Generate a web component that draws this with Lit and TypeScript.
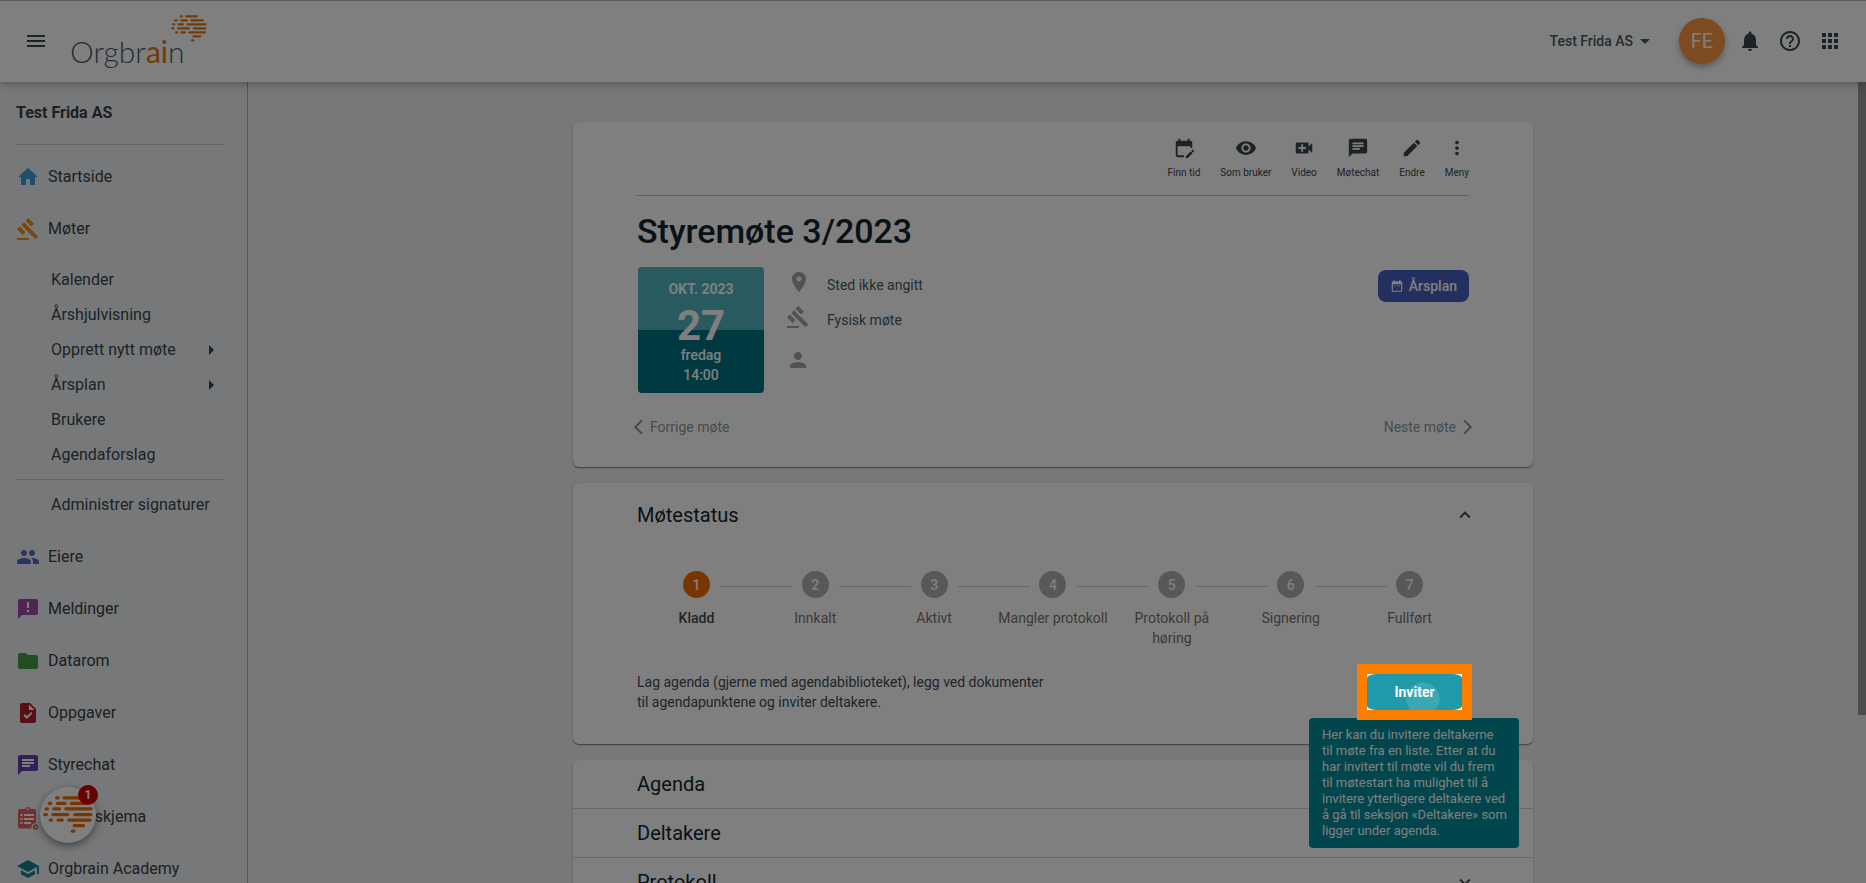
import { LitElement, html, svg, css, nothing } from "lit";
import { customElement, property, state } from "lit/decorators.js";
import { classMap } from "lit/directives/class-map.js";

const ICONS: Record<string, unknown> = {
  menu: svg`<path d="M3 18h18v-2H3v2zm0-5h18v-2H3v2zm0-7v2h18V6H3z"/>`,
  home: svg`<path d="M10 20v-6h4v6h5v-8h3L12 3 2 12h3v8z"/>`,
  gavel: svg`<path d="M1 21h12v2H1zM5.245 8.07l2.83-2.827 14.14 14.142-2.828 2.828zM12.317 1l5.657 5.656-2.83 2.83-5.654-5.66zM3.825 9.485l5.657 5.657-2.828 2.828-5.657-5.657z"/>`,
  group: svg`<path d="M16 11c1.66 0 2.99-1.34 2.99-3S17.66 5 16 5c-1.66 0-3 1.34-3 3s1.34 3 3 3zm-8 0c1.66 0 2.99-1.34 2.99-3S9.66 5 8 5C6.34 5 5 6.34 5 8s1.34 3 3 3zm0 2c-2.33 0-7 1.17-7 3.5V19h14v-2.5c0-2.33-4.67-3.5-7-3.5zm8 0c-.29 0-.62.02-.97.05 1.16.84 1.97 1.97 1.97 3.45V19h6v-2.5c0-2.33-4.67-3.5-7-3.5z"/>`,
  announce: svg`<path d="M20 2H4c-1.1 0-1.99.9-1.99 2L2 22l4-4h14c1.1 0 2-.9 2-2V4c0-1.1-.9-2-2-2z"/><path fill="#fff" d="M11 5h2v6h-2zM11 13h2v2h-2z"/>`,
  folder: svg`<path d="M10 4H4c-1.1 0-1.99.9-1.99 2L2 18c0 1.1.9 2 2 2h16c1.1 0 2-.9 2-2V8c0-1.1-.9-2-2-2h-8l-2-2z"/>`,
  task: svg`<path d="M14 2H6c-1.1 0-1.99.9-1.99 2L4 20c0 1.1.89 2 1.99 2H18c1.1 0 2-.9 2-2V8l-6-6z"/><path fill="#fff" d="M10.94 18L7.4 14.46l1.41-1.41 2.12 2.12 4.24-4.24 1.41 1.41L10.94 18zM13 9V3.5L18.5 9H13z"/>`,
  chat: svg`<path d="M20 2H4c-1.1 0-1.99.9-1.99 2L2 22l4-4h14c1.1 0 2-.9 2-2V4c0-1.1-.9-2-2-2z"/><path fill="#fff" d="M6 9h12v2H6zM6 12h8v2H6zM6 6h12v2H6z"/>`,
  form: svg`<path d="M18.500 4h-4a3 3 0 0 0-5.600 0H4a2 2 0 0 0-2 2v15.500a2 2 0 0 0 2 2h11.500a4.200 4.200 0 0 1 4.500-5.500V6a2 2 0 0 0-1.500-2z"/><circle cx="11.600" cy="4.200" r="1" fill="#fff"/><path fill="#fff" d="M4.500 9h2v2h-2zM8 9h10v2H8zM4.500 13h2v2h-2zM8 13h10v2H8zM4.500 17h2v2h-2zM8 17h7v2H8z"/><circle cx="19.500" cy="22" r="2.700"/><path d="M18.200 22l1 1 1.700-1.900" fill="none" stroke="#fff"/>`,
  school: svg`<path d="M5 13.18v4L12 21l7-3.820v-4L12 17l-7-3.820zM12 3L1 9l11 6 9-4.910V17h2V9L12 3z"/>`,
  bell: svg`<path d="M12 22c1.100 0 2-.9 2-2h-4c0 1.100.89 2 2 2zm6-6v-5c0-3.070-1.640-5.640-4.500-6.320V4c0-.83-.67-1.500-1.500-1.500s-1.500.67-1.500 1.500v.68C7.630 5.360 6 7.920 6 11v5l-2 2v1h16v-1l-2-2z"/>`,
  help: svg`<path d="M11 18h2v-2h-2v2zm1-16C6.480 2 2 6.480 2 12s4.480 10 10 10 10-4.480 10-10S17.520 2 12 2zm0 18c-4.410 0-8-3.590-8-8s3.590-8 8-8 8 3.590 8 8-3.590 8-8 8zm0-14c-2.210 0-4 1.790-4 4h2c0-1.100.9-2 2-2s2 .9 2 2c0 2-3 1.750-3 5h2c0-2.250 3-2.500 3-5 0-2.210-1.790-4-4-4z"/>`,
  apps: svg`<path d="M4 8h4V4H4v4zm6 12h4v-4h-4v4zm-6 0h4v-4H4v4zm0-6h4v-4H4v4zm6 0h4v-4h-4v4zm6-10v4h4V4h-4zm-6 4h4V4h-4v4zm6 6h4v-4h-4v4zm0 6h4v-4h-4v4z"/>`,
  eye: svg`<path d="M12 4.500C7 4.500 2.730 7.610 1 12c1.730 4.390 6 7.500 11 7.500s9.270-3.110 11-7.500c-1.730-4.390-6-7.500-11-7.500zM12 17c-2.760 0-5-2.240-5-5s2.240-5 5-5 5 2.240 5 5-2.240 5-5 5zm0-8c-1.660 0-3 1.340-3 3s1.340 3 3 3 3-1.340 3-3-1.340-3-3-3z"/>`,
  video: svg`<path d="M17 10.500V7c0-.55-.45-1-1-1H4c-.55 0-1 .45-1 1v10c0 .55.45 1 1 1h12c.55 0 1-.45 1-1v-3.500l4 4v-11l-4 4zM14 13h-3v3H9v-3H6v-2h3V8h2v3h3v2z"/>`,
  edit: svg`<path d="M3 17.250V21h3.750L17.810 9.940l-3.750-3.750L3 17.250zM20.710 7.040c.39-.39.39-1.020 0-1.410l-2.340-2.340c-.39-.39-1.020-.39-1.410 0l-1.830 1.830 3.750 3.750 1.830-1.830z"/>`,
  more: svg`<path d="M12 8c1.100 0 2-.9 2-2s-.9-2-2-2-2 .9-2 2 .9 2 2 2zm0 2c-1.100 0-2 .9-2 2s.9 2 2 2 2-.9 2-2-.9-2-2-2zm0 6c-1.100 0-2 .9-2 2s.9 2 2 2 2-.9 2-2-.9-2-2-2z"/>`,
  calendarEdit: svg`<path d="M12 22H5c-1.110 0-2-.9-2-2L3.010 6c0-1.100.88-2 1.990-2h1V2h2v2h8V2h2v2h1c1.100 0 2 .9 2 2v6h-2v-2H5v10h7v2zM22.130 16.990l.71-.71c.39-.39.39-1.020 0-1.410l-.71-.71c-.39-.39-1.020-.39-1.410 0l-.71.71 2.120 2.120zM21.420 17.700l-5.300 5.300H14v-2.120l5.300-5.300 2.120 2.120z"/>`,
  place: svg`<path d="M12 2C8.130 2 5 5.130 5 9c0 5.250 7 13 7 13s7-7.750 7-13c0-3.870-3.130-7-7-7zm0 9.500c-1.380 0-2.500-1.120-2.500-2.500s1.120-2.500 2.500-2.500 2.500 1.120 2.500 2.500-1.120 2.500-2.500 2.500z"/>`,
  person: svg`<path d="M12 12c2.210 0 4-1.790 4-4s-1.790-4-4-4-4 1.790-4 4 1.790 4 4 4zm0 2c-2.670 0-8 1.340-8 4v2h16v-2c0-2.660-5.330-4-8-4z"/>`,
  calendar: svg`<path d="M9 11H7v2h2v-2zm4 0h-2v2h2v-2zm4 0h-2v2h2v-2zm2-7h-1V2h-2v2H8V2H6v2H5c-1.110 0-1.990.9-1.990 2L3 20c0 1.100.89 2 2 2h14c1.100 0 2-.9 2-2V6c0-1.100-.9-2-2-2zm0 16H5V9h14v11z"/>`,
  less: svg`<path d="M12 8l-6 6 1.410 1.410L12 10.830l4.590 4.580L18 14z"/>`,
  expand: svg`<path d="M16.590 8.590L12 13.170 7.410 8.590 6 10l6 6 6-6z"/>`,
  prev: svg`<path d="M16 3l-9 9 9 9" fill="none" stroke="currentColor" stroke-width="2.500"/>`,
  next: svg`<path d="M8 3l9 9-9 9" fill="none" stroke="currentColor" stroke-width="2.500"/>`,
  down: svg`<path d="M7 10l5 5 5-5z"/>`,
  right: svg`<path d="M9 7l5 5-5 5z"/>`,
};

@customElement("ob-icon")
class ObIcon extends LitElement {
  @property() name = "";

  static styles = css`
    :host {
      display: inline-flex;
      flex: none;
      width: 24px;
      height: 24px;
    }
    svg {
      width: 100%;
      height: 100%;
      fill: currentColor;
      overflow: visible;
    }
  `;

  render() {
    return html`<svg viewBox="0 0 24 24" aria-hidden="true">${ICONS[this.name] ?? nothing}</svg>`;
  }
}

/* Rows of dashes forming the brain mark: [row, start, end] */
const DASHES: [number, number, number][] = [
  [0, 26, 36], [0, 42, 81],
  [1, 10, 20], [1, 28, 51], [1, 58, 98],
  [2, 3, 13], [2, 20, 39], [2, 46, 107],
  [3, 0, 11], [3, 18, 57], [3, 65, 107],
  [4, 12, 22], [4, 29, 45], [4, 52, 105],
  [5, 64, 91],
  [6, 60, 70],
];

@customElement("ob-brain")
class ObBrain extends LitElement {
  static styles = css`
    :host {
      display: block;
    }
    svg {
      display: block;
      width: 100%;
      stroke: currentColor;
      stroke-width: 7;
      stroke-linecap: round;
    }
  `;

  render() {
    return html`<svg viewBox="0 0 108 80" aria-hidden="true">
      ${DASHES.map(([r, a, b]) => svg`<path d="M${a + 3.5} ${r * 12 + 4}H${b - 3.5}"/>`)}
    </svg>`;
  }
}

interface NavItem {
  label: string;
  icon: string;
  tone: string;
}

const SUBITEMS = [
  { label: "Kalender", more: false },
  { label: "Årshjulvisning", more: false },
  { label: "Opprett nytt møte", more: true },
  { label: "Årsplan", more: true },
  { label: "Brukere", more: false },
  { label: "Agendaforslag", more: false },
];

const NAV_TOP: NavItem[] = [
  { label: "Startside", icon: "home", tone: "blue" },
  { label: "Møter", icon: "gavel", tone: "orange" },
];

const NAV_BOTTOM: NavItem[] = [
  { label: "Eiere", icon: "group", tone: "indigo" },
  { label: "Meldinger", icon: "announce", tone: "purple" },
  { label: "Datarom", icon: "folder", tone: "green" },
  { label: "Oppgaver", icon: "task", tone: "red" },
  { label: "Styrechat", icon: "chat", tone: "violet" },
  { label: "Spørreskjema", icon: "form", tone: "coral" },
  { label: "Orgbrain Academy", icon: "school", tone: "teal" },
];

@customElement("ob-sidebar")
class ObSidebar extends LitElement {
  static styles = css`
    :host {
      display: block;
      box-sizing: border-box;
      width: 248px;
      flex: none;
      border-right: 1px solid #acaeb1;
      padding: 0 23px 0 16px;
      overflow: hidden;
      color: #3c3e40;
      font-size: 16px;
    }
    h2 {
      margin: 0;
      font-size: 16px;
      font-weight: 700;
      line-height: 62px;
      color: #3c3e40;
    }
    hr {
      margin: 0;
      border: 0;
      border-top: 1px solid #cbcdd0;
    }
    nav {
      display: flex;
      flex-direction: column;
    }
    .main {
      padding-top: 6px;
    }
    a {
      display: flex;
      align-items: center;
      color: inherit;
      text-decoration: none;
      white-space: nowrap;
    }
    .item {
      gap: 8px;
      height: 52px;
    }
    .sub {
      justify-content: space-between;
      height: 35px;
      padding: 0 0 0 35px;
      color: #37474f;
    }
    .subs {
      padding: 7px 0;
    }
    .admin {
      padding: 7px 0 9px;
    }
    .blue { color: #3f9fd8; }
    .orange { color: #f28c1c; }
    .indigo { color: #4f6cc0; }
    .purple { color: #9c4aa8; }
    .green { color: #439a46; }
    .red { color: #b01f26; }
    .violet { color: #673ab7; }
    .coral { color: #e0605e; }
    .teal { color: #128390; }
  `;

  private item(i: NavItem) {
    return html`<a class="item" href="#"><ob-icon class=${i.tone} name=${i.icon}></ob-icon>${i.label}</a>`;
  }

  render() {
    return html`
      <h2>Test Frida AS</h2>
      <hr />
      <nav class="main">
        ${NAV_TOP.map((i) => this.item(i))}
        <div class="subs">
          ${SUBITEMS.map(
            (s) => html`<a class="sub" href="#">${s.label}${s.more ? html`<ob-icon name="right"></ob-icon>` : nothing}</a>`
          )}
        </div>
        <hr />
        <div class="admin"><a class="sub" href="#">Administrer signaturer</a></div>
        ${NAV_BOTTOM.map((i) => this.item(i))}
      </nav>
    `;
  }
}

const TOOLS = [
  ["calendarEdit", "Finn tid"],
  ["eye", "Som bruker"],
  ["video", "Video"],
  ["chat", "Møtechat"],
  ["edit", "Endre"],
  ["more", "Meny"],
];

const STEPS = ["Kladd", "Innkalt", "Aktivt", "Mangler protokoll", "Protokoll på høring", "Signering", "Fullført"];

const SECTIONS = ["Agenda", "Deltakere", "Protokoll"];

@customElement("app-root")
class AppRoot extends LitElement {
  @state() private current = 0;

  static styles = css`
    :host {
      display: flex;
      flex-direction: column;
      position: relative;
      height: 100vh;
      overflow: hidden;
      background: #eef0f3;
      font-family: Roboto, "Liberation Sans", sans-serif;
      font-size: 14px;
      line-height: 20px;
      color: #37474f;
    }
    button {
      margin: 0;
      padding: 0;
      border: 0;
      background: none;
      color: inherit;
      font: inherit;
      cursor: pointer;
    }
    a {
      color: inherit;
      text-decoration: none;
    }
    ob-icon {
      display: flex;
    }

    header {
      display: flex;
      align-items: center;
      position: relative;
      z-index: 1;
      box-sizing: border-box;
      flex: none;
      height: 82px;
      padding: 0 24px 1px;
      border-top: 1px solid #b4b4b4;
      background: #fff;
      box-shadow: 0 2px 8px rgba(0, 0, 0, 0.3);
      color: #37474f;
    }
    .logo {
      display: flex;
      position: relative;
      margin-left: 22px;
      padding: 20px 22px 0 0;
      font-family: Lato, "Open Sans", sans-serif;
      font-size: 30px;
      font-weight: 300;
      line-height: 40px;
      color: #455f6b;
    }
    .logo b {
      font-weight: 400;
      color: #e8740c;
    }
    .logo ob-brain {
      position: absolute;
      top: 4px;
      right: 0;
      width: 36px;
      color: #e8740c;
    }
    .tools {
      display: flex;
      align-items: center;
      gap: 16px;
      margin-left: auto;
    }
    .org {
      display: flex;
      align-items: center;
      font-weight: 500;
      color: #455a64;
    }
    .avatar {
      display: grid;
      place-items: center;
      width: 46px;
      height: 46px;
      margin: 0 -3px 0 6px;
      border-radius: 50%;
      background: #f8963f;
      box-shadow: 0 3px 6px rgba(0, 0, 0, 0.3);
      color: #fff;
      font-size: 20px;
    }

    .body {
      display: flex;
      flex: 1;
      min-height: 0;
    }
    main {
      flex: 1;
      min-width: 0;
      overflow: hidden;
      padding: 40px 24px 0;
    }
    .track {
      width: 8px;
      flex: none;
    }
    .thumb {
      height: 79%;
      background: #999;
    }
    .column {
      display: flex;
      flex-direction: column;
      gap: 16px;
      max-width: 960px;
      margin: 0 auto;
    }
    .card {
      border-radius: 6px;
      background: #fff;
      box-shadow: 0 1px 1px rgba(0, 0, 0, 0.4), 0 1px 3px rgba(0, 0, 0, 0.12);
    }
    .meeting {
      padding: 15px 64px 30px;
    }
    .actions {
      display: flex;
      justify-content: flex-end;
      gap: 20px;
      padding-bottom: 15px;
      border-bottom: 1px solid #c4c4c4;
    }
    .action {
      display: flex;
      flex-direction: column;
      align-items: center;
      gap: 7px;
      font-size: 10px;
      line-height: 14px;
    }
    .action ob-icon,
    .toggle ob-icon {
      width: 22px;
      height: 22px;
    }
    h1 {
      margin: 15px 0;
      font-size: 34px;
      font-weight: 500;
      line-height: 41px;
      color: #10242e;
    }
    .info {
      display: flex;
      align-items: flex-start;
    }
    .date {
      display: flex;
      flex-direction: column;
      align-items: center;
      box-sizing: border-box;
      width: 126px;
      height: 126px;
      margin-left: 1px;
      padding-top: 12px;
      border-radius: 4px;
      background: linear-gradient(#50b4be 50%, #007280 50%);
      color: #fff;
      font-weight: 500;
    }
    .date strong {
      font-weight: 700;
    }
    .day {
      padding: 7px 0 0;
      font-size: 42px;
      font-weight: 700;
      line-height: 39px;
    }
    .facts {
      display: grid;
      grid-template-columns: 24px auto;
      grid-template-rows: 35px 35px 46px;
      column-gap: 17px;
      align-items: center;
      margin: 0 auto 0 22px;
      color: #455a64;
    }
    .facts ob-icon {
      color: #9aa7ad;
    }
    .facts .pin {
      margin: 0 0 6px 1px;
    }
    .facts .gavel {
      margin-bottom: 6px;
    }
    .plan {
      display: flex;
      align-items: center;
      gap: 5px;
      height: 32px;
      margin-top: 3px;
      padding: 0 12px;
      border-radius: 8px;
      background: #465ebe;
      color: #fff;
      font-weight: 500;
    }
    .plan ob-icon {
      width: 14px;
      height: 14px;
    }
    .pager {
      display: flex;
      justify-content: space-between;
      margin: 24px -7px 0;
      color: #8a999f;
    }
    .pager a {
      display: flex;
      align-items: center;
      gap: 2px;
    }
    .pager ob-icon {
      width: 18px;
      height: 18px;
    }

    .status {
      padding: 0 64px 32px;
    }
    h2 {
      margin: 0;
      font-size: 20px;
      font-weight: 400;
      line-height: 24px;
      color: #10242e;
    }
    .status-head {
      display: flex;
      align-items: center;
      justify-content: space-between;
      height: 64px;
    }
    .toggle {
      margin-right: -7px;
      color: #444;
    }
    .steps {
      display: grid;
      grid-template-columns: repeat(7, 1fr);
      margin: 0;
      padding: 24px 0 0;
      list-style: none;
    }
    .step {
      display: flex;
      flex-direction: column;
      align-items: center;
      position: relative;
      gap: 10px;
      padding: 0 4px;
      text-align: center;
      color: #757575;
    }
    .step + .step::before {
      content: "";
      position: absolute;
      top: 15px;
      left: calc(24px - 50%);
      width: calc(100% - 47px);
      border-top: 1px solid #d0d0d0;
    }
    .num {
      display: grid;
      place-items: center;
      width: 27px;
      height: 27px;
      border-radius: 50%;
      background: #b0b0b0;
      color: #fff;
      font-weight: 500;
    }
    .step.on {
      color: #424a4f;
      font-weight: 500;
    }
    .on .num {
      background: #ef6c00;
    }
    .guide {
      display: flex;
      align-items: flex-start;
      justify-content: space-between;
      padding: 24px 7px 0 0;
    }
    .guide p {
      max-width: 416px;
      margin: 0;
      color: #424a4f;
    }
    .target {
      position: relative;
      width: 95px;
      height: 36px;
      margin-top: 2px;
    }
    .spot {
      position: absolute;
      inset: -10px;
      z-index: 6;
      border: 10px solid #fa7f00;
      background: #fff;
    }
    .invite {
      width: 100%;
      height: 100%;
      border-radius: 10px / 4px;
      background: radial-gradient(circle at 56px 25px, #3ba7b5 16px, #209aaa 17px);
      color: #fff;
      font-weight: 700;
      display: block;
    }
    .tip {
      position: absolute;
      top: 44px;
      left: -58px;
      z-index: 4;
      box-sizing: border-box;
      width: 210px;
      padding: 9px 12px 9px 13px;
      border-radius: 4px;
      background: #008c99;
      color: #fff;
      font-size: 13px;
      line-height: 16px;
    }
    .row {
      display: flex;
      align-items: center;
      justify-content: space-between;
      height: 48px;
      padding: 0 64px;
    }
    .row + .row {
      border-top: 1px solid #d4d4d4;
    }

    .fab {
      position: absolute;
      left: 40px;
      bottom: 40px;
      z-index: 3;
      display: grid;
      place-items: center;
      width: 56px;
      height: 56px;
      border-radius: 50%;
      background: #fff;
      box-shadow: 0 3px 8px rgba(0, 0, 0, 0.45);
    }
    .fab ob-brain {
      width: 50px;
      color: #f06a00;
    }
    .count {
      position: absolute;
      top: -2px;
      right: -2px;
      width: 20px;
      height: 20px;
      border-radius: 50%;
      background: #d00000;
      color: #fff;
      font-size: 12px;
      font-weight: 700;
      line-height: 20px;
      text-align: center;
    }
    .veil {
      position: absolute;
      inset: 0;
      z-index: 5;
      background: rgba(0, 0, 0, 0.5);
      pointer-events: none;
    }
  `;

  private renderMeeting() {
    return html`
      <section class="card meeting">
        <div class="actions">
          ${TOOLS.map(
            ([icon, label]) => html`<button class="action"><ob-icon name=${icon}></ob-icon>${label}</button>`
          )}
        </div>
        <h1>Styremøte 3/2023</h1>
        <div class="info">
          <div class="date">
            <strong>OKT. 2023</strong>
            <span class="day">27</span>
            <span>fredag</span>
            <span>14:00</span>
          </div>
          <div class="facts">
            <ob-icon class="pin" name="place"></ob-icon><span>Sted ikke angitt</span>
            <ob-icon class="gavel" name="gavel"></ob-icon><span>Fysisk møte</span>
            <ob-icon name="person"></ob-icon><span></span>
          </div>
          <button class="plan"><ob-icon name="calendar"></ob-icon>Årsplan</button>
        </div>
        <div class="pager">
          <a href="#"><ob-icon name="prev"></ob-icon>Forrige møte</a>
          <a href="#">Neste møte<ob-icon name="next"></ob-icon></a>
        </div>
      </section>
    `;
  }

  private renderStatus() {
    return html`
      <section class="card status">
        <div class="status-head">
          <h2>Møtestatus</h2>
          <button class="toggle" aria-label="Møtestatus"><ob-icon name="less"></ob-icon></button>
        </div>
        <ol class="steps">
          ${STEPS.map(
            (label, i) => html`<li class=${classMap({ step: true, on: i === this.current })}>
              <span class="num">${i + 1}</span><span>${label}</span>
            </li>`
          )}
        </ol>
        <div class="guide">
          <p>Lag agenda (gjerne med agendabiblioteket), legg ved dokumenter til agendapunktene og inviter deltakere.</p>
          <div class="target">
            <div class="spot"><button class="invite" aria-describedby="tip">Inviter</button></div>
            <div class="tip" id="tip" role="tooltip">
              Her kan du invitere deltakerne til møte fra en liste. Etter at du har invitert til møte vil du frem til
              møtestart ha mulighet til å invitere ytterligere deltakere ved å gå til seksjon «Deltakere» som ligger
              under agenda.
            </div>
          </div>
        </div>
      </section>
    `;
  }

  render() {
    return html`
      <header>
        <button aria-label="Meny"><ob-icon name="menu"></ob-icon></button>
        <a class="logo" href="#"><span>Orgbr<b>ai</b>n</span><ob-brain></ob-brain></a>
        <div class="tools">
          <button class="org">Test Frida AS<ob-icon name="down"></ob-icon></button>
          <button class="avatar">FE</button>
          <button aria-label="Varsler"><ob-icon name="bell"></ob-icon></button>
          <button aria-label="Hjelp"><ob-icon name="help"></ob-icon></button>
          <button aria-label="Apper"><ob-icon name="apps"></ob-icon></button>
        </div>
      </header>
      <div class="body">
        <ob-sidebar></ob-sidebar>
        <main>
          <div class="column">
            ${this.renderMeeting()} ${this.renderStatus()}
            <section class="card">
              ${SECTIONS.map(
                (s) => html`<div class="row">
                  <h2>${s}</h2>
                  <button class="toggle" aria-label=${s}><ob-icon name="expand"></ob-icon></button>
                </div>`
              )}
            </section>
          </div>
        </main>
        <div class="track"><div class="thumb"></div></div>
      </div>
      <button class="fab" aria-label="Chat"><ob-brain></ob-brain><span class="count">1</span></button>
      <div class="veil"></div>
    `;
  }
}
